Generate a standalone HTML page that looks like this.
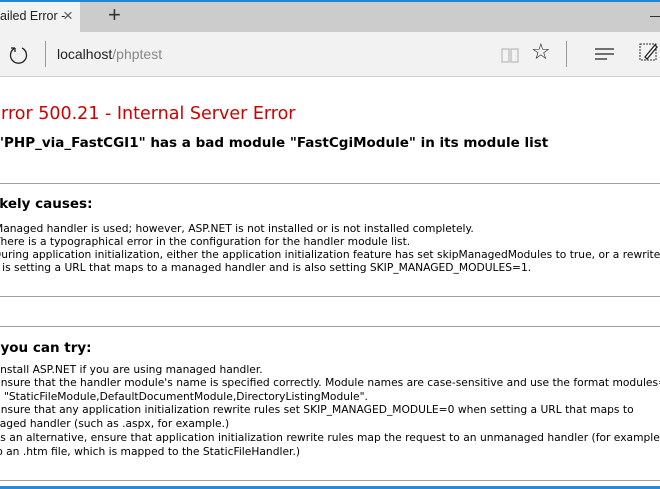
<!DOCTYPE html>
<html><head><meta charset="utf-8"><style>
*{margin:0;padding:0;box-sizing:border-box}
body{width:660px;height:489px;overflow:hidden;background:#fff;position:relative;font-family:"DejaVu Sans",Verdana,sans-serif}
.a{position:absolute;white-space:nowrap}
.t{font-size:10.7px;color:#000;line-height:13px}
.hr{position:absolute;left:0;width:660px;height:1px;background:#a0a0a0}
</style></head><body>
<div class="a" style="left:0;top:0;width:660px;height:2px;background:#1e88d8"></div>
<div class="a" style="left:0;top:2px;width:660px;height:30px;background:#cccccc"></div>
<div class="a" style="left:0;top:2px;width:80px;height:30px;background:#f2f2f2"></div>
<div class="a" style="left:0;top:9px;font-family:'Liberation Sans',sans-serif;font-size:12.5px;color:#222">ailed Error -</div>
<div class="a" style="left:63px;top:6px;font-family:'Liberation Sans',sans-serif;font-size:17px;color:#555">×</div>
<div class="a" style="left:108px;top:2px;font-family:'Liberation Sans',sans-serif;font-size:22px;color:#333;font-weight:300">+</div>
<div class="a" style="left:650px;top:16px;width:10px;height:1px;background:#333"></div>
<div class="a" style="left:0;top:32px;width:660px;height:45px;background:#f2f2f2;border-bottom:1px solid #d4d4d4"></div>
<svg class="a" style="left:8px;top:44px" width="22" height="22" viewBox="0 0 22 22"><path d="M7 4 A8 8 0 1 0 14 4" fill="none" stroke="#222" stroke-width="1.3"/><path d="M7 4 L7 8 M7 4 L3 4" stroke="#222" stroke-width="1.3" fill="none"/></svg>
<div class="a" style="left:45px;top:41px;width:1px;height:26px;background:#999"></div>
<div class="a" style="left:57px;top:46px;font-family:'Liberation Sans',sans-serif;font-size:14px;color:#222">localhost<span style="color:#888">/phptest</span></div>
<svg class="a" style="left:500px;top:45px" width="20" height="20"><path d="M2 4h7v13H2zM11 4h7v13h-7z" fill="none" stroke="#bbb" stroke-width="1.2"/></svg>
<div class="a" style="left:531px;top:40px;font-size:22px;color:#222">☆</div>
<div class="a" style="left:566px;top:41px;width:1px;height:26px;background:#999"></div>
<svg class="a" style="left:594px;top:46px" width="22" height="16"><path d="M1 3h19M1 8h19M1 13h12" stroke="#222" stroke-width="1.3"/></svg>
<svg class="a" style="left:638px;top:42px" width="22" height="22"><rect x="2" y="2" width="16" height="16" fill="none" stroke="#333" stroke-dasharray="2 1"/><path d="M7 15 L17 3 L19 5 L9 17 Z" fill="#fff" stroke="#222" stroke-width="1.3"/></svg>

<div class="a" style="left:-10px;top:104px;font-size:17.5px;color:#cc0000">Error 500.21 - Internal Server Error</div>
<div class="a" style="left:-3px;top:135px;font-size:13.5px;font-weight:bold;color:#000">"PHP_via_FastCGI1" has a bad module "FastCgiModule" in its module list</div>
<div class="hr" style="top:183px"></div>
<div class="a" style="left:-14px;top:196px;font-size:13.5px;font-weight:bold">Likely causes:</div>
<div class="a t" style="left:-6px;top:222px">Managed handler is used; however, ASP.NET is not installed or is not installed completely.</div>
<div class="a t" style="left:-6px;top:235px">There is a typographical error in the configuration for the handler module list.</div>
<div class="a t" style="left:-7px;top:248px">During application initialization, either the application initialization feature has set skipManagedModules to true, or a rewrite</div>
<div class="a t" style="left:-22px;top:261px">rule is setting a URL that maps to a managed handler and is also setting SKIP_MANAGED_MODULES=1.</div>
<div class="hr" style="top:296px"></div>
<div class="hr" style="top:326px"></div>
<div class="a" style="left:-55px;top:340px;font-size:13.5px;font-weight:bold">Things you can try:</div>
<div class="a t" style="left:-3px;top:363px">Install ASP.NET if you are using managed handler.</div>
<div class="a t" style="left:-6px;top:376px">Ensure that the handler module's name is specified correctly. Module names are case-sensitive and use the format modules=</div>
<div class="a t" style="left:-6px;top:390px">a "StaticFileModule,DefaultDocumentModule,DirectoryListingModule".</div>
<div class="a t" style="left:-6px;top:403px">Ensure that any application initialization rewrite rules set SKIP_MANAGED_MODULE=0 when setting a URL that maps to</div>
<div class="a t" style="left:-24px;top:417px">managed handler (such as .aspx, for example.)</div>
<div class="a t" style="left:-7px;top:431px">As an alternative, ensure that application initialization rewrite rules map the request to an unmanaged handler (for example,</div>
<div class="a t" style="left:-8px;top:445px">to an .htm file, which is mapped to the StaticFileHandler.)</div>
<div class="hr" style="top:480px"></div>
<div class="a" style="left:0;top:486px;width:660px;height:3px;background:#2a8ad8"></div>
</body></html>
